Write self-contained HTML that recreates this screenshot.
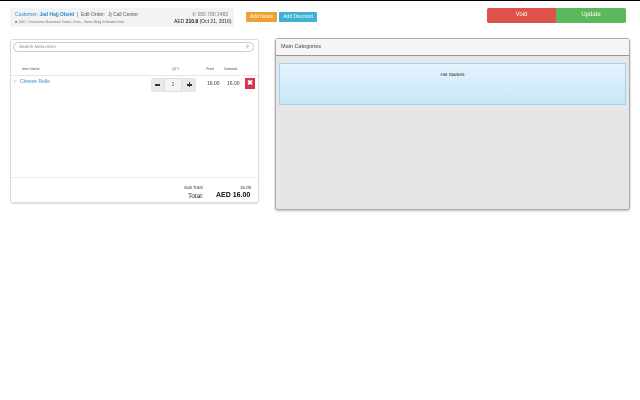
<!DOCTYPE html>
<html><head><style>
*{margin:0;padding:0;box-sizing:border-box}
body{width:640px;height:400px;background:#fff;font-family:"Liberation Sans",sans-serif;position:relative;overflow:hidden;border-top:1px solid #000}
.a{position:absolute;white-space:nowrap}
</style></head><body>
<div class="a" style="left:10px;top:7px;width:224px;height:19px;background:#f3f3f3;border-radius:2px"></div>
<div class="a" style="left:15px;top:11px;font-size:5px;color:#555"><span style="color:#2a8bd1">Customer: <b>Jad Hajj Obeid</b></span> &nbsp;|&nbsp; Edit Order: &nbsp;Jj Call Center</div>
<div class="a" style="left:15px;top:19px;font-size:3.6px;color:#777">■ 1507, Grosvenor Business Tower, Xxxx., Same Bldg Emirates Nbd</div>
<div class="a" style="left:192px;top:11px;font-size:5px;color:#777">✆ 055 780 2482</div>
<div class="a" style="left:174px;top:18px;font-size:5px;color:#222">AED <b>210.8</b> (Oct 21, 2016)</div>
<div class="a" style="left:246px;top:11px;width:31px;height:10px;background:#f0a030;border-radius:1px;color:#fff;font-size:5px;text-align:center;line-height:10px">Add Notes</div>
<div class="a" style="left:279px;top:11px;width:38px;height:10px;background:#3fb0d5;border-radius:1px;color:#fff;font-size:5px;text-align:center;line-height:10px">Add Discount</div>
<div class="a" style="left:487px;top:7px;width:69px;height:15px;background:#dd524d;color:#fff;font-size:6px;text-align:center;line-height:15px;border-radius:2px 0 0 2px">Void</div>
<div class="a" style="left:556px;top:7px;width:70px;height:15px;background:#5cb85c;color:#fff;font-size:6px;text-align:center;line-height:15px;border-radius:0 2px 2px 0">Update</div>

<div class="a" style="left:10px;top:38px;width:249px;height:164px;border:1px solid #ddd;border-radius:3px;box-shadow:0 1px 1px #ddd"></div>
<div class="a" style="left:13px;top:41px;width:241px;height:10px;border:1px solid #ccc;border-radius:5px;font-size:4.5px;color:#888;padding-left:5px;line-height:8px">Search Menu Item<span style="position:absolute;right:4px">⚲</span></div>
<div class="a" style="left:22px;top:66px;font-size:3.6px;color:#555">Item Name</div>
<div class="a" style="left:172px;top:66px;font-size:3.6px;color:#555">QTY</div>
<div class="a" style="left:206px;top:66px;font-size:3.6px;color:#555">Price</div>
<div class="a" style="left:224px;top:66px;font-size:3.6px;color:#555">Subtotal</div>
<div class="a" style="left:11px;top:74px;width:247px;height:1px;background:#e6e6e6"></div>
<div class="a" style="left:14px;top:78px;font-size:5px;color:#2a8bd1">›&nbsp;&nbsp; Cheese Rolls</div>
<div class="a" style="left:151px;top:77px;width:45px;height:14px;background:#e8e8e8;border-radius:2px"></div>
<div class="a" style="left:164px;top:77px;width:18px;height:14px;background:#f4f4f4;border:1px solid #ddd;font-size:5px;text-align:center;line-height:12px;color:#333">1</div>
<div class="a" style="left:155px;top:83px;width:5px;height:1.5px;background:#333"></div>
<div class="a" style="left:187px;top:83px;width:5px;height:1.5px;background:#333"></div>
<div class="a" style="left:188.75px;top:81px;width:1.5px;height:5px;background:#333"></div>
<div class="a" style="left:207px;top:80px;font-size:5px;color:#333">16.00</div>
<div class="a" style="left:227px;top:80px;font-size:5px;color:#333">16.00</div>
<div class="a" style="left:245px;top:77px;width:10px;height:11px;background:#d9334e;color:#fff;font-size:7px;font-weight:bold;text-align:center;line-height:11px">✖</div>
<div class="a" style="left:11px;top:176px;width:247px;height:1px;background:#eee"></div>
<div class="a" style="left:184px;top:184px;font-size:4.5px;color:#333">Sub Total</div>
<div class="a" style="left:240px;top:184px;font-size:4.5px;color:#333">16.00</div>
<div class="a" style="left:188px;top:192px;font-size:6.5px;color:#222">Total:</div>
<div class="a" style="left:216px;top:191px;font-size:7px;font-weight:bold;color:#111">AED 16.00</div>

<div class="a" style="left:275px;top:37px;width:355px;height:172px;border:1px solid #aaa;border-radius:3px;background:#e6e6e6;box-shadow:0 1px 2px #bbb"></div>
<div class="a" style="left:276px;top:38px;width:353px;height:17px;background:#f5f5f5;border-bottom:1px solid #999;font-size:5.5px;color:#444;padding-left:5px;line-height:17px">Main Categories</div>
<div class="a" style="left:279px;top:62px;width:347px;height:42px;background:linear-gradient(#e3f4fd,#c9e6f6);border:1px solid #9cd3f2;font-size:4.5px;color:#111;text-align:center;padding-top:8px">Hot Starters</div>
</body></html>
